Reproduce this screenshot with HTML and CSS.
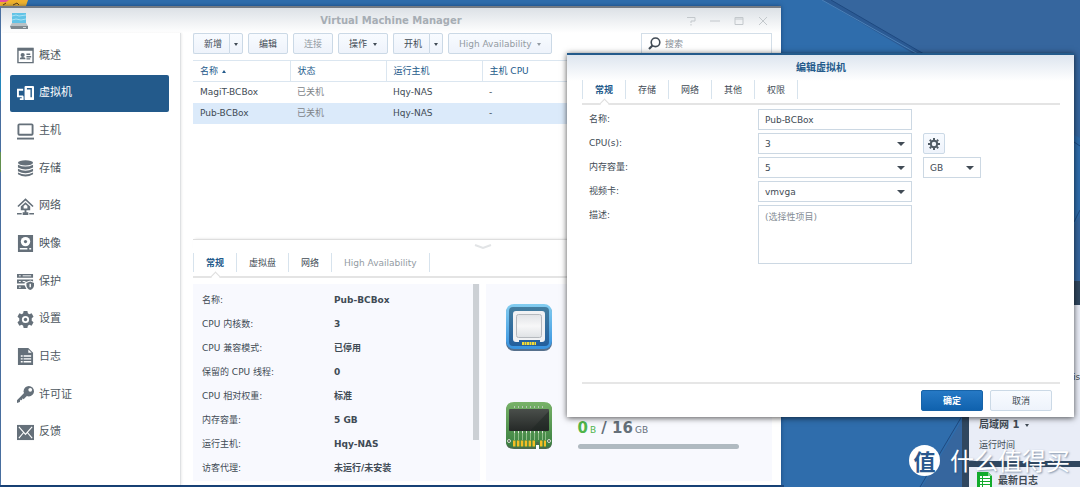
FILE: index.html
```
<!DOCTYPE html>
<html lang="zh-CN">
<head>
<meta charset="utf-8">
<title>Virtual Machine Manager</title>
<link rel="stylesheet" href="styles.css">
</head>
<body>
<div class="desktop">
  <svg class="wallpaper" viewBox="0 0 1080 487" preserveAspectRatio="xMaxYMin slice" aria-hidden="true">
    <rect width="1080" height="487" fill="#2f6dac"/>
    <path d="M826 0 1080 138V487H922L1010 340 1080 215V0Z" fill="#36669e"/>
    <path d="M822 0H831L924 54H914Z" fill="#2b5a94"/>
    <path d="M822 0 918 54" stroke="#4a80b8" fill="none"/>
    <path d="M831 0 924 54" stroke="#1f4a80" fill="none"/>
    <path d="M1074 142 1080 146M1080 210 1074 222M962 416 920 487" stroke="#1f4a80" stroke-width="1" fill="none"/>
    <rect width="1" height="487" fill="#5f86b8"/>
    <path d="M0 0H28L26 6H0Z" fill="#f2b32c"/>
    <path d="M0 0H9L6 2H0Z" fill="#e54fa0"/>
    <path d="M3 5 6 3M13 5 17 3 19 5" stroke="#5c3a14" fill="none"/>
    <path d="M0 73H1V101H0Z" fill="#2fa5dd"/>
    <path d="M0 152H1V172H0Z" fill="#7fb24d"/>
    <rect y="485" width="784" height="2" fill="#1c487e"/>
  </svg>

  <aside class="widget">
    <div class="widget-head"></div>
    <div class="widget-card widget-health">
      <span class="widget-clip">is</span>
      <div class="widget-lan">局域网 1 <i class="caret"></i></div>
      <div class="widget-uptime">运行时间</div>
    </div>
    <div class="widget-card widget-log">
      <svg width="15" height="18" viewBox="0 0 15 18" aria-hidden="true"><path d="M0 1H11L15 5V18H0Z" fill="#12ab2c"/><path d="M11 1V5H15Z" fill="#7bd68a"/><path d="M3 6H5M6 6H13M3 9H5M6 9H13M3 12H5M6 12H13M3 15H5M6 15H13" stroke="#fff" stroke-width="2"/></svg>
      <span>最新日志</span>
    </div>
  </aside>

  <section class="window">
    <header class="titlebar">
      <svg width="18" height="18" viewBox="0 0 18 18" aria-hidden="true"><path d="M2 1H16V11H2Z" fill="#62c3e6"/><path d="M2 4 6 3 9 4 16 3M2 8 6 7 11 8 16 7" stroke="#a9e2f4" fill="none"/><path d="M2 11H16L18 14H0Z" fill="#b9c1c5"/><path d="M0 14H18V17H1Z" fill="#7e888e"/><path d="M13 15.500H16" stroke="#ced5d8"/></svg>
      <h1>Virtual Machine Manager</h1>
      <div class="window-controls">
        <button aria-label="帮助"><svg width="10" height="10" viewBox="0 0 10 10"><path d="M1 1.500H9V5H5V7M5 8V9.500"/></svg></button>
        <button aria-label="最小化"><svg width="10" height="10" viewBox="0 0 10 10"><path d="M0 5H10"/></svg></button>
        <button aria-label="最大化"><svg width="10" height="10" viewBox="0 0 10 10"><path d="M1 1.500H9V8.500H1ZM1 3H9"/></svg></button>
        <button aria-label="关闭"><svg width="10" height="10" viewBox="0 0 10 10"><path d="M1 1 9 9M9 1 1 9"/></svg></button>
      </div>
    </header>
    <div class="window-body">
      <nav class="sidebar">
        <a href="#"><svg viewBox="0 0 18 18"><path d="M1 1.500H17V16.500H1Z" fill="none" stroke="currentColor" stroke-width="1.500"/><path d="M1 1H17V4H1Z"/><circle cx="6" cy="8.500" r="2.200"/><path d="M3 13Q3 10.500 6 10.500T9 13ZM10 7H14V8.500H10ZM10 9.500H15V11H10ZM10 12H14V13.200H10Z"/></svg>概述</a>
        <a href="#" class="active"><svg viewBox="0 0 18 18"><rect x="8" y="1" width="10" height="15" rx="1"/><path d="M10.500 4H15V13" fill="none" stroke="#235a8b" stroke-width="1.500"/><path d="M6.500 5H1V12H6.500M6 12V15H3" fill="none" stroke="currentColor" stroke-width="2"/></svg>虚拟机</a>
        <a href="#"><svg viewBox="0 0 18 18"><rect x="1.500" y="1.500" width="15" height="11" rx="1" fill="none" stroke="currentColor" stroke-width="2"/><path d="M0 15.500H18V17.500H0Z"/></svg>主机</a>
        <a href="#"><svg viewBox="0 0 18 18"><ellipse cx="9" cy="3" rx="8" ry="2.800"/><path d="M1 5Q9 9 17 5V8Q9 12 1 8ZM1 9.300Q9 13.300 17 9.300V12Q9 16 1 12ZM1 13.300Q9 17.300 17 13.300V15Q9 20 1 15Z"/></svg>存储</a>
        <a href="#"><svg viewBox="0 0 18 18"><path d="M1 9 9 1.500 17 9" fill="none" stroke="currentColor" stroke-width="1.700"/><path d="M4 9 9 4.500 14 9V13H4Z"/><path d="M7 11V8.500L9 7 11 8.500V11Z" fill="#fff"/><path d="M8 12H10V15H8ZM6 15H12V18H6ZM0 16H5V17.500H0ZM13 16H18V17.500H13Z"/></svg>网络</a>
        <a href="#"><svg viewBox="0 0 18 18"><path d="M1 0H17V18H1Z"/><circle cx="9" cy="7" r="5" fill="#fff"/><circle cx="9" cy="7" r="1.700"/><path d="M3 14.500H11M13 14.500H15" stroke="#fff" stroke-width="1.500"/></svg>映像</a>
        <a href="#"><svg viewBox="0 0 18 18"><path d="M0 1H17V5H0ZM0 7H17V9L14 8 8 10V11H0ZM0 13H8L10 17H0Z"/><path d="M2 3H4M6 3H15M2 9H4M6 9H9M2 15H4" stroke="#fff"/><path d="M14 9 18 10.500V13Q18 16.500 14 18 10 16.500 10 13V10.500Z"/><path d="M14 11.500V15" stroke="#fff" stroke-width="1.500"/></svg>保护</a>
        <a href="#"><svg viewBox="0 0 18 18"><path d="M6.500 2.500 7 0H11L11.500 2.500 13 3.400 15.500 2.500 17.500 6 15.600 7.800V10.200L17.500 12 15.500 15.500 13 14.600 11.500 15.500 11 18H7L6.500 15.500 5 14.600 2.500 15.500.5 12 2.400 10.200V7.800L.5 6 2.500 2.500 5 3.400Z"/><circle cx="9" cy="9" r="3.800" fill="#fff"/><circle cx="9" cy="9" r="1.800"/></svg>设置</a>
        <a href="#"><svg viewBox="0 0 18 18"><path d="M1 0H12L17 5V18H1Z"/><path d="M12 1.500V5H15.500Z" fill="#fff"/><path d="M4 8.500H6M7 8.500H15M4 11.500H6M7 11.500H15M4 14.500H6M7 14.500H15" stroke="#fff" stroke-width="1.500"/></svg>日志</a>
        <a href="#"><svg viewBox="0 0 18 18"><circle cx="12.500" cy="5.500" r="5.500"/><circle cx="14" cy="4" r="2" fill="#fff"/><path d="M8 7 11 10 7 14 6 13 5 15 3.500 14.500 3 17 0 18V15Z"/></svg>许可证</a>
        <a href="#"><svg viewBox="0 0 18 18"><path d="M0 1H18V17H0Z"/><path d="M2 3 9 11 16 3M2 15 7 9M16 15 11 9" fill="none" stroke="#fff" stroke-width="1.200"/></svg>反馈</a>
      </nav>
      <main class="content">
        <div class="toolbar">
          <div class="split"><button class="btn">新增</button><button class="btn btn-drop" aria-label="新增选项"><i class="caret"></i></button></div>
          <button class="btn">编辑</button>
          <button class="btn" disabled>连接</button>
          <button class="btn">操作 <i class="caret"></i></button>
          <div class="split"><button class="btn">开机</button><button class="btn btn-drop" aria-label="开机选项"><i class="caret"></i></button></div>
          <button class="btn" disabled>High Availability <i class="caret"></i></button>
          <label class="search">
            <svg width="13" height="13" viewBox="0 0 13 13" aria-hidden="true"><circle cx="7.500" cy="5.300" r="4.300" fill="none" stroke="#414b55" stroke-width="1.600"/><path d="M4.500 8.500 1 12" stroke="#414b55" stroke-width="2.200"/></svg>
            <input type="search" placeholder="搜索" aria-label="搜索">
          </label>
        </div>
        <div class="list">
          <table>
            <thead><tr><th class="col-name">名称 <i class="caret caret-up"></i></th><th class="col">状态</th><th class="col">运行主机</th><th>主机 CPU</th></tr></thead>
            <tbody>
              <tr><td>MagiT-BCBox</td><td class="muted">已关机</td><td>Hqy-NAS</td><td>-</td></tr>
              <tr class="selected"><td>Pub-BCBox</td><td class="muted">已关机</td><td>Hqy-NAS</td><td>-</td></tr>
            </tbody>
          </table>
        </div>
        <div class="splitter"><svg width="18" height="6" viewBox="0 0 18 6" aria-hidden="true"><path d="M1 1 9 4 17 1" fill="none" stroke="#e2e4e6" stroke-width="2"/></svg></div>
        <div class="tabs" role="tablist">
          <button role="tab" class="tab on" aria-selected="true">常规</button><button role="tab" class="tab">虚拟盘</button><button role="tab" class="tab">网络</button><button role="tab" class="tab" disabled>High Availability</button>
        </div>
        <div class="details">
          <div class="panel info">
            <dl>
              <dt>名称:</dt><dd>Pub-BCBox</dd>
              <dt>CPU 内核数:</dt><dd>3</dd>
              <dt>CPU 兼容模式:</dt><dd>已停用</dd>
              <dt>保留的 CPU 线程:</dt><dd>0</dd>
              <dt>CPU 相对权重:</dt><dd>标准</dd>
              <dt>内存容量:</dt><dd>5 GB</dd>
              <dt>运行主机:</dt><dd>Hqy-NAS</dd>
              <dt>访客代理:</dt><dd>未运行/未安装</dd>
            </dl>
            <div class="scrollbar"></div>
          </div>
          <div class="panel usage">
            <div class="meter">
              <svg width="48" height="48" viewBox="0 0 48 48" aria-hidden="true">
                <defs>
                  <linearGradient id="cpu-edge" x2="0" y2="1"><stop stop-color="#83cdf0"/><stop offset="1" stop-color="#3792df"/></linearGradient>
                  <linearGradient id="cpu-well" x2="0" y2="1"><stop stop-color="#447ea0"/><stop offset="1" stop-color="#235f9d"/></linearGradient>
                  <linearGradient id="cpu-chip" x2="0" y2="1"><stop stop-color="#e1e3e6"/><stop offset=".5" stop-color="#f7f7f8"/><stop offset="1" stop-color="#dfe2e5"/></linearGradient>
                </defs>
                <rect x="1" y="2" width="46" height="46" rx="8" fill="#56708c"/>
                <rect x="1" y="1" width="46" height="45" rx="8" fill="url(#cpu-edge)"/>
                <rect x="4" y="4" width="40" height="39" rx="4" fill="url(#cpu-well)"/>
                <path d="M11 8H37Q40 8 40 11V36Q40 39 37 39H35V37H14V39H11Q8 39 8 36V11Q8 8 11 8Z" fill="#f1f2f4"/>
                <rect x="11.500" y="11.500" width="25" height="23" rx="2" fill="url(#cpu-chip)" stroke="#b5b9be"/>
                <path d="M17 40.500H31" stroke="#f3dc35" stroke-width="3" stroke-dasharray="2 .5"/>
              </svg>
              <div></div>
            </div>
            <div class="meter">
              <svg width="48" height="48" viewBox="0 0 48 48" aria-hidden="true">
                <defs>
                  <linearGradient id="ram-board" x2="0" y2="1"><stop stop-color="#78b268"/><stop offset="1" stop-color="#397f40"/></linearGradient>
                  <linearGradient id="ram-chip" x2="0" y2="1"><stop stop-color="#4a4f4b"/><stop offset="1" stop-color="#252927"/></linearGradient>
                </defs>
                <path d="M1 10Q1 2 9 2H39Q47 2 47 10V41Q47 48 41 48H34V44H31V48H9Q1 48 1 41Z" fill="#496b4c"/>
                <path d="M1 9Q1 1 9 1H39Q47 1 47 9V40Q47 46 41 46H34V41H31V46H9Q1 46 1 40Z" fill="url(#ram-board)"/>
                <path d="M9 6H41" stroke="#b8c8b4" stroke-width="2" stroke-dasharray="1 3"/>
                <path d="M9.500 31V39M13.500 31V39M17.500 31V39M21.500 31V39M25.500 31V39M29.500 31V39M33.500 31V39M37.500 31V39M40.500 31V39" stroke="#8fbd88"/>
                <path d="M9 31H41" stroke="#dce5d8" stroke-width="2" stroke-dasharray="1 3"/>
                <rect x="4" y="8" width="40" height="22" rx="1" fill="url(#ram-chip)"/><path d="M44 10V29H26Z" fill="#1d2522" opacity=".45"/>
                <path d="M8 42.500H30M35 42.500H41" stroke="#f4bd25" stroke-width="6" stroke-dasharray="2.500 1.400"/>
                <g fill="#4c5b4b" stroke="#d5dfd1"><circle cx="4" cy="40" r="1.500"/><circle cx="44" cy="40" r="1.500"/></g>
              </svg>
              <div>
                <div class="amount"><span class="used">0<small>B</small></span> / 16<small>GB</small></div>
                <div class="bar"></div>
              </div>
            </div>
          </div>
        </div>
      </main>
    </div>
  </section>

  <section class="dialog" role="dialog" aria-labelledby="dialog-title">
    <h2 id="dialog-title">编辑虚拟机</h2>
    <div class="tabs" role="tablist">
      <button role="tab" class="tab on" aria-selected="true">常规</button><button role="tab" class="tab">存储</button><button role="tab" class="tab">网络</button><button role="tab" class="tab">其他</button><button role="tab" class="tab">权限</button>
    </div>
    <form class="form">
      <label for="vm-name">名称:</label><input id="vm-name" class="field" value="Pub-BCBox">
      <label for="vm-cpu" class="start">CPU(s):</label>
      <div class="select"><select id="vm-cpu" class="field"><option>3</option></select><i class="arrow"></i></div>
      <button type="button" class="btn gear" aria-label="CPU 设置"><svg width="12" height="12" viewBox="0 0 12 12"><circle cx="6" cy="6" r="3.200" fill="none" stroke="#505b65" stroke-width="2"/><path d="M6 0V2M6 10V12M0 6H2M10 6H12M1.800 1.800 3.200 3.200M8.800 8.800 10.200 10.200M1.800 10.200 3.200 8.800M8.800 3.200 10.200 1.800" stroke="#505b65" stroke-width="2"/></svg></button>
      <label for="vm-mem" class="start">内存容量:</label>
      <div class="select"><select id="vm-mem" class="field"><option>5</option></select><i class="arrow"></i></div>
      <div class="select unit"><select class="field" aria-label="单位"><option>GB</option></select><i class="arrow"></i></div>
      <label for="vm-video" class="start">视频卡:</label>
      <div class="select"><select id="vm-video" class="field"><option>vmvga</option></select><i class="arrow"></i></div>
      <label for="vm-desc" class="start">描述:</label><textarea id="vm-desc" class="field" placeholder="(选择性项目)"></textarea>
    </form>
    <footer class="dialog-footer"><button class="btn primary">确定</button><button class="btn">取消</button></footer>
  </section>

  <div class="watermark"><span class="seal">值</span><span>什么值得买</span></div>
</div>
</body>
</html>
```
FILE: styles.css
```
* { box-sizing: border-box; }
body, h1, h2, dl, dd { margin: 0; }
body, button, input, select, textarea {
  font-family: "DejaVu Sans", "Noto Sans CJK SC", sans-serif;
  font-size: 9px;
  line-height: 14px;
  color: #414b55;
}
button, input, select, textarea { margin: 0; outline: 0; }
svg { display: block; flex: none; }

.desktop { position: relative; height: 100vh; overflow: hidden; background: #2f6dac; }
.wallpaper { position: absolute; inset: 0; width: 100%; height: 100%; }

.caret {
  display: inline-block;
  border: 2px solid transparent;
  border-top: 3px solid currentColor;
  border-bottom: 0;
  vertical-align: middle;
  margin-left: 2px;
}
.caret-up { border-top: 0; border-bottom: 3px solid currentColor; margin-left: 1px; }

.window {
  position: absolute;
  inset: 6px 299px 2px 1px;
  display: flex;
  flex-direction: column;
  background: #fff;
  border-top: 2px solid #747b84;
  box-shadow: 0 0 4px #0b2c5899;
}
.titlebar {
  display: grid;
  grid-template-columns: 100px 1fr 100px;
  align-items: center;
  height: 25px;
  padding: 0 9px;
  background: linear-gradient(#dce1e6, #fff);
}
.titlebar h1 { font-size: 10px; text-align: center; color: #a6adb4; }
.window-controls { display: flex; justify-content: flex-end; gap: 14px; padding-right: 4px; }
.window-controls button { padding: 0; border: 0; background: none; }
.window-controls path { fill: none; stroke: #c3c8cc; }
.window-body { flex: 1; display: flex; min-height: 0; }

.sidebar {
  width: 180px;
  display: grid;
  grid-auto-rows: 1fr;
  padding: 4px 11px 34px 9px;
  border-right: 1px solid #dfe1e3;
  box-shadow: 1px 0 2px #00000012;
}
.sidebar a {
  display: flex;
  align-items: center;
  gap: 5px;
  padding-left: 7px;
  border-radius: 2px;
  color: #4d5760;
  font-size: 11px;
  text-decoration: none;
}
.sidebar svg { width: 17px; height: 17px; fill: currentColor; color: #65707a; }
.sidebar .active, .sidebar .active svg { color: #fff; }
.sidebar .active { background: #235a8b; }

.content { flex: 1; min-width: 0; display: flex; flex-direction: column; padding: 0 9px 4px 12px; }
.toolbar { display: flex; gap: 5px; }
.btn {
  height: 21px;
  padding: 0 10px;
  border: 1px solid #cbd9e6;
  border-radius: 2px;
  background: linear-gradient(#f8fbff, #eef3fb);
  white-space: nowrap;
}
.btn:disabled { color: #939ba3; }
.btn .caret { margin-left: 3px; }
.split { display: flex; }
.split .btn:first-child { border-right: 0; border-radius: 2px 0 0 2px; padding: 0 7px 0 10px; }
.split .btn-drop { padding: 0 4px; border-radius: 0 2px 2px 0; }
.btn-drop .caret { margin: 0; }
.search {
  width: 131px;
  height: 21px;
  margin-left: auto;
  display: flex;
  align-items: center;
  gap: 4px;
  padding: 0 6px;
  border: 1px solid #d3dee8;
}
.search input { flex: 1; min-width: 0; padding: 0; border: 0; background: none; }
::placeholder { color: #858d95; opacity: 1; }

.list { flex: 1; margin-top: 6px; min-height: 0; }
table { width: 100%; table-layout: fixed; border-collapse: collapse; }
.col-name { width: 97px; }
.col { width: 96px; }
th, td { height: 21px; padding: 0 7px; text-align: left; font-weight: normal; }
th {
  color: #235a8b;
  border: 0 solid #dbe6f0;
  border-width: 1px 0 1px 1px;
}
th:first-child { border-left: 0; }
.muted { color: #808489; }
.selected { background: #dbeafa; }

.splitter {
  height: 14px;
  display: flex;
  justify-content: center;
  padding-top: 4px;
  border-top: 1px solid #dedede;
  box-shadow: 0 -2px 3px -2px #00000022;
}
.tabs { display: flex; padding-bottom: 4px; border-bottom: 2px solid #e4e4e4; }
.tab {
  position: relative;
  height: 19px;
  padding: 0 12px;
  border: 0;
  border-left: 1px solid #d7e3ed;
  background: none;
}
.tab:last-child { border-right: 1px solid #d7e3ed; }
.tab:disabled { color: #939ba3; }
.tab.on { font-weight: bold; color: #235a8b; }
.tab.on::after {
  content: "";
  position: absolute;
  left: 50%;
  bottom: -8px;
  width: 6px;
  height: 6px;
  margin-left: -3px;
  background: #fff;
  border: solid #dedede;
  border-width: 1px 0 0 1px;
  rotate: 45deg;
}

.details { flex: none; display: grid; grid-template-columns: 1fr 1fr; gap: 6px; height: 203px; padding-top: 6px; }
.panel { background: #f8f9fe; overflow: hidden; }
.info { display: flex; justify-content: space-between; }
dl { display: grid; grid-template-columns: 132px auto; grid-auto-rows: 24px; align-items: center; padding: 4px 0 0 9px; }
dd { font-weight: bold; }
.scrollbar { width: 6px; height: 156px; margin-right: 1px; background: #ccd0d5; }
.usage { padding: 19px 33px 0 19px; }
.meter { display: grid; grid-template-columns: 48px 1fr; gap: 25px; height: 98px; align-items: start; }
.amount { padding-top: 18px; font-size: 15px; line-height: 18px; font-weight: bold; color: #65707a; }
.amount small { font-size: 9px; font-weight: normal; margin-left: 2px; }
.used { color: #4fb54b; }
.bar { height: 5px; margin-top: 5px; border-radius: 3px; background: #b0bac1; }

.dialog {
  position: absolute;
  inset: 53px 6px 70px 567px;
  display: flex;
  flex-direction: column;
  padding: 0 14px 6px 15px;
  border-top: 2px solid #235a8b;
  background: linear-gradient(#dde5ef, #fff 26px);
  box-shadow: 0 1px 6px #000000b0;
}
.dialog h2 { height: 25px; font-size: 10px; line-height: 25px; text-align: center; color: #235a8b; }
.form {
  flex: 1;
  display: grid;
  grid-template-columns: 169px 154px 69px;
  grid-template-rows: repeat(4, 21px) 59px;
  align-content: start;
  row-gap: 3px;
  padding: 4px 0 0 7px;
}
.form label { line-height: 21px; }
.start { grid-column: 1; }
.field {
  width: 100%;
  height: 21px;
  padding: 0 6px;
  border: 1px solid #ccd8e3;
  border-radius: 0;
  background: #fff;
  appearance: none;
}
textarea.field { height: 59px; padding: 4px 6px; resize: none; }
.select { display: grid; align-items: center; }
.select > * { grid-area: 1 / 1; }
.arrow {
  justify-self: end;
  margin-right: 7px;
  border: 4px solid transparent;
  border-top-color: #414b55;
  border-bottom: 0;
  pointer-events: none;
}
.unit, .gear { margin-left: 11px; }
.gear { width: 22px; padding: 0 4px; }
.dialog-footer { display: flex; justify-content: flex-end; gap: 7px; padding: 6px 8px 0 0; border-top: 2px solid #e6e6e6; }
.dialog-footer .btn { width: 62px; }
.dialog-footer .primary { color: #fff; font-weight: bold; border-color: #1763a8; background: linear-gradient(#2679c5, #1062ae); }

.widget {
  position: absolute;
  inset: 281px 0 0 962px;
  padding-left: 7px;
  display: flex;
  flex-direction: column;
  gap: 6px;
  background: #30475f;
}
.widget-head { height: 18px; }
.widget-card { background: #e9edf7; font-weight: bold; overflow: hidden; }
.widget-health { flex: none; height: 156px; padding: 65px 0 0 10px; }
.widget-clip { display: block; margin-left: 94px; font-weight: normal; }
.widget-lan { padding-top: 34px; font-size: 10px; }
.widget-uptime { padding-top: 6px; font-weight: normal; }
.widget-log { flex: 1; display: flex; gap: 6px; padding: 4px 0 0 8px; font-size: 10px; line-height: 20px; }

.watermark {
  position: absolute;
  right: 10px;
  bottom: 9px;
  display: flex;
  align-items: center;
  gap: 10px;
  color: #fff;
  font: 24px/36px "Noto Sans CJK SC", sans-serif;
  text-shadow: 1px 1px 2px #34506f99;
}
.seal {
  width: 31px;
  height: 31px;
  border-radius: 50%;
  background: #fff;
  color: #29578d;
  font-size: 22px;
  line-height: 31px;
  font-weight: bold;
  text-align: center;
  text-shadow: none;
}
```
